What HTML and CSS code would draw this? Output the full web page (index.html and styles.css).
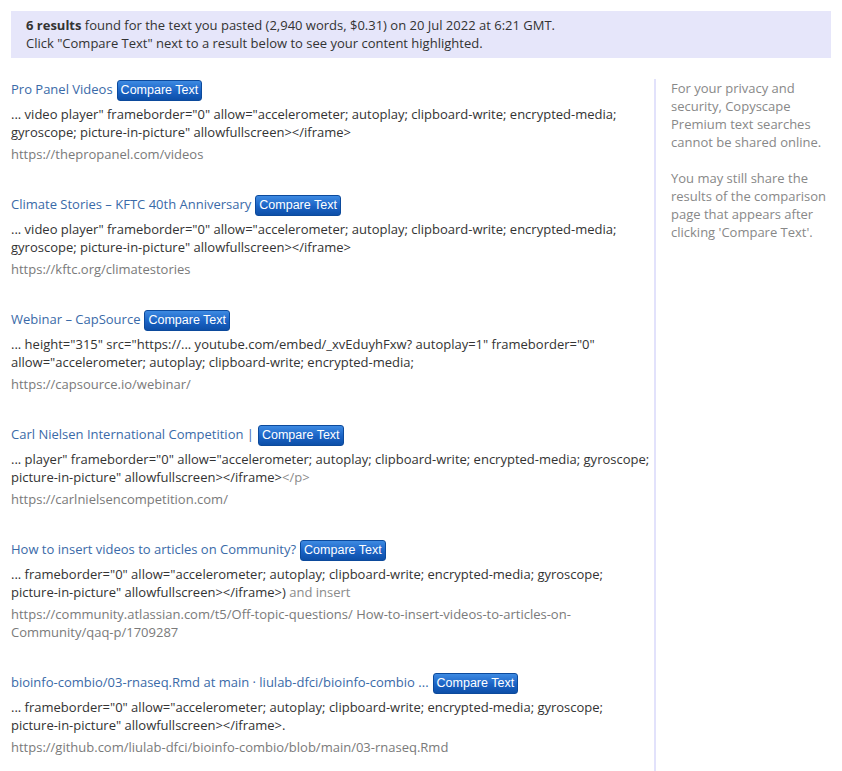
FILE: index.html
```html
<!DOCTYPE html>
<html lang="en">
<head>
    <meta charset="UTF-8">
    <meta name="viewport" content="width=device-width, initial-scale=1.0">
    <title>Copyscape Premium Results</title>
    <link rel="stylesheet" href="styles.css">
</head>
<body>

    <!-- Summary banner -->
    <div class="summary">
        <b>6 results</b> found for the text you pasted (2,940 words, $0.31) on 20 Jul 2022 at 6:21 GMT.<br>
        Click "Compare Text" next to a result below to see your content highlighted.
    </div>

    <div class="main">
        <div class="results">

            <div class="result">
                <div class="result-title">
                    <a href="#">Pro Panel Videos</a>
                    <button class="compare-btn">Compare Text</button>
                </div>
                <div class="snippet">... video player" frameborder="0" allow="accelerometer; autoplay; clipboard-write; encrypted-media; gyroscope; picture-in-picture" allowfullscreen&gt;&lt;/iframe&gt;</div>
                <div class="result-url">https://thepropanel.com/videos</div>
            </div>

            <div class="result">
                <div class="result-title">
                    <a href="#">Climate Stories – KFTC 40th Anniversary</a>
                    <button class="compare-btn">Compare Text</button>
                </div>
                <div class="snippet">... video player" frameborder="0" allow="accelerometer; autoplay; clipboard-write; encrypted-media; gyroscope; picture-in-picture" allowfullscreen&gt;&lt;/iframe&gt;</div>
                <div class="result-url">https://kftc.org/climatestories</div>
            </div>

            <div class="result">
                <div class="result-title">
                    <a href="#">Webinar – CapSource</a>
                    <button class="compare-btn">Compare Text</button>
                </div>
                <div class="snippet">... height="315" src="https://... youtube.com/embed/_xvEduyhFxw? autoplay=1" frameborder="0" allow="accelerometer; autoplay; clipboard-write; encrypted-media;</div>
                <div class="result-url">https://capsource.io/webinar/</div>
            </div>

            <div class="result">
                <div class="result-title">
                    <a href="#">Carl Nielsen International Competition |</a>
                    <button class="compare-btn">Compare Text</button>
                </div>
                <div class="snippet">... player" frameborder="0" allow="accelerometer; autoplay; clipboard-write; encrypted-media; gyroscope; picture-in-picture" allowfullscreen&gt;&lt;/iframe&gt;<span class="faded">&lt;/p&gt;</span></div>
                <div class="result-url">https://carlnielsencompetition.com/</div>
            </div>

            <div class="result">
                <div class="result-title">
                    <a href="#">How to insert videos to articles on Community?</a>
                    <button class="compare-btn">Compare Text</button>
                </div>
                <div class="snippet">... frameborder="0" allow="accelerometer; autoplay; clipboard-write; encrypted-media; gyroscope; picture-in-picture" allowfullscreen&gt;&lt;/iframe&gt;)<span class="faded"> and insert</span></div>
                <div class="result-url">https://community.atlassian.com/t5/Off-topic-questions/ How-to-insert-videos-to-articles-on-Community/qaq-p/1709287</div>
            </div>

            <div class="result">
                <div class="result-title">
                    <a href="#">bioinfo-combio/03-rnaseq.Rmd at main · liulab-dfci/bioinfo-combio ...</a>
                    <button class="compare-btn">Compare Text</button>
                </div>
                <div class="snippet">... frameborder="0" allow="accelerometer; autoplay; clipboard-write; encrypted-media; gyroscope; picture-in-picture" allowfullscreen&gt;&lt;/iframe&gt;.</div>
                <div class="result-url">https://github.com/liulab-dfci/bioinfo-combio/blob/main/03-rnaseq.Rmd</div>
            </div>

        </div>

        <!-- Privacy note -->
        <div class="sidebar">
            <p>For your privacy and security, Copyscape Premium text searches cannot be shared online.</p>
            <p>You may still share the results of the comparison page that appears after clicking 'Compare Text'.</p>
        </div>
    </div>

</body>
</html>
```

FILE: styles.css
```css
body {
    margin: 0;
    padding: 11px;
    font-family: "Open Sans", Arial, sans-serif;
    font-size: 13px;
    line-height: 18px;
    color: #333;
    background: #fff;
}
.summary {
    background: #e6e6fa;
    padding: 5px 15px 6px;
}
.summary b {
    font-weight: 700;
}
.main {
    display: grid;
    grid-template-columns: 640px 1fr;
    column-gap: 3px;
    margin-top: 21px;
}
.results {
    padding-top: 1px;
}
.result {
    margin-bottom: 32px;
}
.result-title {
    display: flex;
    align-items: flex-start;
    gap: 4px;
    height: 22px;
}
.result-title a {
    color: #3a6aa8;
    text-decoration: none;
}
.compare-btn {
    font-family: "Liberation Sans", Arial, sans-serif;
    font-size: 12.5px;
    line-height: 19px;
    height: 21px;
    padding: 0 3px;
    color: #fff;
    border: 1px solid #0c4a9c;
    border-radius: 3px;
    background: linear-gradient(#3d8ae2, #1a62c4 55%, #0d4fa8);
    cursor: pointer;
}
.snippet {
    margin-top: 3px;
}
.faded {
    color: #8a8a8a;
}
.result-url {
    margin-top: 4px;
    color: #7a7a7a;
}
.sidebar {
    border-left: 2px solid #e2e2fb;
    padding-left: 15px;
    color: #888;
}
.sidebar p {
    margin: 0 0 18px;
}
```
